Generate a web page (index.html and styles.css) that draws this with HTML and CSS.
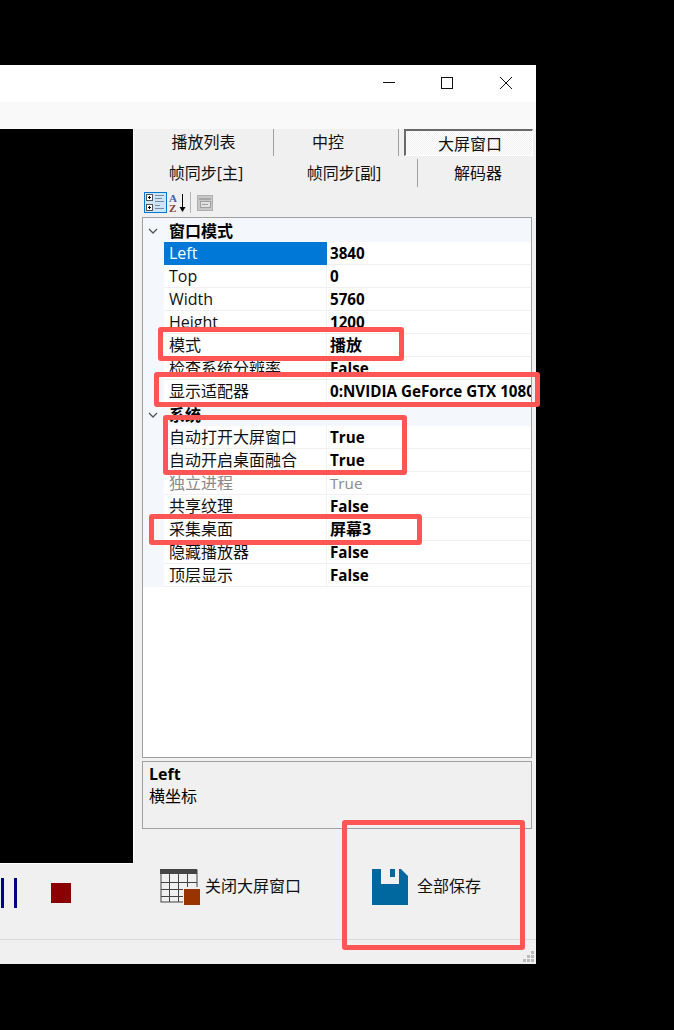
FILE: index.html
```html
<!DOCTYPE html>
<html lang="zh">
<head>
<meta charset="utf-8">
<title>大屏窗口</title>
<link rel="stylesheet" href="styles.css">
</head>
<body>
<div class="window">
  <div class="titlebar">
    <svg class="winbtn winmin" width="12" height="12" viewBox="0 0 12 12"><path d="M0 5.5H12" stroke="#111" fill="none"/></svg>
    <svg class="winbtn" width="12" height="12" viewBox="0 0 12 12"><rect x=".5" y=".5" width="11" height="11" stroke="#111" fill="none"/></svg>
    <svg class="winbtn" width="12" height="12" viewBox="0 0 12 12"><path d="M0 0L12 12M12 0L0 12" stroke="#111" fill="none"/></svg>
  </div>
  <div class="strip"></div>
  <div class="main">
    <div class="video"></div>
    <div class="side">
      <div class="tabs">
        <div class="tab tab-a">播放列表</div>
        <div class="tab tab-b">中控</div>
        <div class="tab tab-c">大屏窗口</div>
      </div>
      <div class="tabs2">
        <div class="tab2 t2-a">帧同步[主]</div>
        <div class="tab2 t2-b">帧同步[副]</div>
        <div class="tab2 t2-c">解码器</div>
      </div>
      <div class="tools">
        <div class="toolbtn">
          <svg width="21" height="19" viewBox="0 0 21 19">
            <rect x="1.5" y="1.5" width="6" height="6" fill="#fff" stroke="#555"/>
            <path d="M3 4.500H6M4.500 3V6" stroke="#000"/>
            <rect x="1.500" y="11.500" width="6" height="6" fill="#fff" stroke="#555"/>
            <path d="M3 14.500H6M4.500 13V16" stroke="#000"/>
            <path d="M10 2.500h9M10 5.500h7M10 8.500h9M10 12.500h5M10 15.500h9" stroke="#7d8ba0"/>
          </svg>
        </div>
        <svg class="sort" width="18" height="22" viewBox="0 0 18 22">
          <text x="0" y="10" class="az az-a">A</text>
          <text x="0" y="20" class="az az-z">Z</text>
          <path d="M13.500 2V16" stroke="#000"/>
          <path d="M10.500 15H16.500L13.500 20Z" fill="#000"/>
        </svg>
        <div class="toolsep"></div>
        <svg class="pages" width="16" height="16" viewBox="0 0 16 16">
          <rect x=".5" y=".5" width="15" height="15" fill="#c8c8c8" stroke="#b0b0b0"/>
          <rect x="2" y="3" width="12" height="2" fill="#a8a8a8"/>
          <rect x="3.500" y="6.500" width="10" height="6" fill="#e2e2e2" stroke="#a0a0a0"/>
          <path d="M5 9.500H11" stroke="#a0a0a0"/>
        </svg>
      </div>
      <div class="grid">
        <div class="cat"><svg class="chev" width="10" height="6" viewBox="0 0 10 6"><path d="M1 1L5 5L9 1" stroke="#555" stroke-width="1.300" fill="none"/></svg><span class="catname">窗口模式</span></div>
        <div class="row"><div class="name sel">Left</div><div class="val">3840</div></div>
        <div class="row"><div class="name">Top</div><div class="val">0</div></div>
        <div class="row"><div class="name">Width</div><div class="val">5760</div></div>
        <div class="row"><div class="name">Height</div><div class="val">1200</div></div>
        <div class="row"><div class="name">模式</div><div class="val val-cjk">播放</div></div>
        <div class="row"><div class="name">检查系统分辨率</div><div class="val">False</div></div>
        <div class="row"><div class="name">显示适配器</div><div class="val">0:NVIDIA GeForce GTX 1080</div></div>
        <div class="cat"><svg class="chev" width="10" height="6" viewBox="0 0 10 6"><path d="M1 1L5 5L9 1" stroke="#555" stroke-width="1.300" fill="none"/></svg><span class="catname">系统</span></div>
        <div class="row"><div class="name">自动打开大屏窗口</div><div class="val">True</div></div>
        <div class="row"><div class="name">自动开启桌面融合</div><div class="val">True</div></div>
        <div class="row off"><div class="name">独立进程</div><div class="val">True</div></div>
        <div class="row"><div class="name">共享纹理</div><div class="val">False</div></div>
        <div class="row"><div class="name">采集桌面</div><div class="val val-cjk">屏幕3</div></div>
        <div class="row"><div class="name">隐藏播放器</div><div class="val">False</div></div>
        <div class="row"><div class="name">顶层显示</div><div class="val">False</div></div>
      </div>
      <div class="desc">
        <div class="desc-title">Left</div>
        <div class="desc-text">横坐标</div>
      </div>
    </div>
  </div>
  <div class="bottom">
    <div class="player">
      <div class="pause"><i></i><i></i></div>
      <div class="stop"></div>
    </div>
    <div class="action action-close">
      <svg width="41" height="37" viewBox="0 0 41 37">
        <rect x="1" y="1" width="36" height="32" fill="none" stroke="#444" stroke-width="1"/>
        <rect x="0" y="0" width="37" height="5" fill="#444"/>
        <path d="M9.500 5V33M18.500 5V33M27.500 5V33M1 13.500H37M1 20.500H37M1 27.500H37" stroke="#444" fill="none"/>
        <rect x="23" y="18" width="18" height="19" fill="#f0f0f0"/>
        <rect x="24" y="20" width="16" height="16" fill="#993300"/>
      </svg>
      <span>关闭大屏窗口</span>
    </div>
    <div class="action action-save">
      <svg width="36" height="36" viewBox="0 0 36 36">
        <path d="M0 0H29L36 7V36H0ZM9 0V15H27V0Z" fill="#00689f" fill-rule="evenodd"/>
        <rect x="18" y="0" width="5" height="8" fill="#00689f"/>
      </svg>
      <span>全部保存</span>
    </div>
  </div>
  <div class="status">
    <svg class="grip" width="11" height="11" viewBox="0 0 11 11"><path d="M8 0h3v3H8zM4 4h3v3H4zM8 4h3v3H8zM0 8h3v3H0zM4 8h3v3H4zM8 8h3v3H8z" fill="#bbb"/></svg>
  </div>
</div>
<div class="mark m1"></div>
<div class="mark m2"></div>
<div class="mark m3"></div>
<div class="mark m4"></div>
<div class="mark m5"></div>
</body>
</html>
```
FILE: styles.css
```css
* { box-sizing: border-box; }
html, body { margin: 0; height: 100%; }
body {
  background: #000;
  position: relative;
  overflow: hidden;
  font-family: "Open Sans", "Noto Sans CJK SC", sans-serif;
  font-size: 16px;
  color: #000;
}
.window {
  width: 536px;
  height: 899px;
  margin-top: 65px;
  background: #f0f0f0;
  display: flex;
  flex-direction: column;
}
.titlebar {
  height: 37px;
  background: #fff;
  display: flex;
  justify-content: flex-end;
  align-items: flex-start;
  gap: 47px;
  padding: 12px 24px 0 0;
}
.winmin { margin-right: -1px; }
.strip { height: 27px; background: #f9f9f9; }
.main { display: flex; height: 735px; }
.video {
  width: 134px;
  height: 735px;
  background: #000;
  border-right: 1px solid #fff;
  border-bottom: 1px solid #fff;
}
.side { width: 402px; }
.tabs { display: flex; height: 27px; }
.tab { text-align: center; line-height: 27px; color: #111; }
.tab-a { width: 140px; border-right: 1px solid #a0a0a0; }
.tab-b { width: 125px; padding-right: 16px; border-right: 1px solid #a0a0a0; }
.tab-c {
  width: 129px;
  margin-left: 5px;
  padding-left: 2px;
  border-top: 2px solid #696969;
  border-left: 2px solid #696969;
  border-right: 1px solid #fff;
  border-bottom: 1px solid #fff;
  background: repeating-conic-gradient(#f0f0f0 0 25%, #fff 0 50%) 0 0 / 2px 2px;
}
.tabs2 { display: flex; height: 30px; margin-top: 2px; }
.tab2 { text-align: center; line-height: 30px; color: #111; }
.t2-a { width: 144px; }
.t2-b { width: 132px; }
.t2-c {
  width: 119px;
  height: 28px;
  margin: 1px 0 0 7px;
  padding-left: 2px;
  line-height: 28px;
  border-left: 1px solid #a0a0a0;
}
.tools {
  display: flex;
  align-items: center;
  height: 23px;
  margin-top: 3px;
  padding-left: 10px;
}
.toolbtn {
  width: 23px;
  height: 21px;
  background: #cce4f7;
  border: 1px solid #0078d7;
  display: flex;
  align-items: center;
  justify-content: center;
}
.sort { margin-left: 2px; }
.az { font-family: "Liberation Serif", serif; font-weight: 700; font-size: 11px; }
.az-a { fill: #3a5fb0; }
.az-z { fill: #8b3a3a; }
.toolsep { width: 1px; height: 21px; background: #b5b5b5; margin-left: 3px; }
.pages { margin-left: 6px; }
.grid {
  width: 390px;
  height: 541px;
  margin: 3px 0 0 8px;
  background: #fff;
  border: 1px solid #a0a0a0;
}
.cat {
  height: 24px;
  background: #f4f7fc;
  display: flex;
  align-items: center;
  padding-top: 1px;
}
.row + .cat { height: 23px; }
.chev { margin-left: 5px; }
.catname { font-weight: 700; margin-left: 11px; line-height: 22px; }
.row {
  height: 23px;
  display: flex;
  background: linear-gradient(#f4f7fc, #f4f7fc) 0 0 / 21px 100% no-repeat;
  padding-left: 21px;
}
.name {
  width: 163px;
  padding-left: 5px;
  line-height: 22px;
  border-bottom: 1px solid #f0f0f0;
  border-right: 1px solid #f0f0f0;
  color: #111;
  white-space: nowrap;
  overflow: hidden;
}
.name.sel { background: #0078d7; color: #fff; border-color: #0078d7; }
.val {
  flex: 1;
  padding-left: 3px;
  font-size: 15.2px;
  line-height: 22px;
  font-weight: 700;
  border-bottom: 1px solid #f0f0f0;
  white-space: nowrap;
  overflow: hidden;
}
.val-cjk { font-size: 16px; }
.off .name, .off .val { color: #8a8a8a; font-weight: 400; }
.desc {
  width: 390px;
  height: 68px;
  margin: 3px 0 0 8px;
  border: 1px solid #a0a0a0;
  padding: 2px 6px;
}
.desc-title { font-weight: 700; line-height: 20px; }
.desc-text { line-height: 24px; }
.bottom { display: flex; height: 76px; border-bottom: 1px solid #d8d8d8; }
.player { width: 160px; display: flex; align-items: flex-start; padding: 14px 0 0 1px; }
.pause { display: flex; gap: 10px; width: 50px; }
.pause i { display: block; width: 3px; height: 30px; background: #00008b; }
.stop { width: 20px; height: 20px; margin-top: 5px; background: #8b0000; }
.action { display: flex; color: #111; padding-top: 5px; align-items: flex-start; }
.action span { margin-top: 6px; line-height: 22px; }
.action-close { width: 212px; gap: 4px; }
.action-save { gap: 9px; }
.status { flex: 1; display: flex; justify-content: flex-end; align-items: flex-end; padding: 0 2px 2px 0; }
.mark {
  position: absolute;
  border: 5px solid #ff5555;
  border-radius: 3px;
}
.m1 { left: 158px; top: 327px; width: 246px; height: 34px; }
.m2 { left: 154px; top: 372px; width: 386px; height: 35px; }
.m3 { left: 163px; top: 415px; width: 244px; height: 60px; }
.m4 { left: 149px; top: 514px; width: 273px; height: 31px; }
.m5 { left: 342px; top: 820px; width: 183px; height: 130px; }
```
